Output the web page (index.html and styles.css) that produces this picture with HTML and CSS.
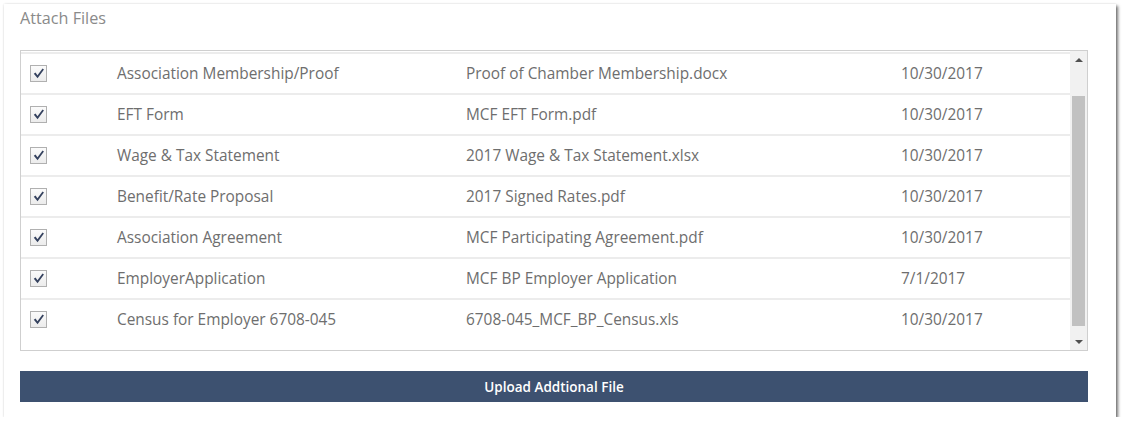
FILE: index.html
```
<!DOCTYPE html>
<html>
<head>
<meta charset="utf-8">
<link rel="stylesheet" href="styles.css">
</head>
<body>
<div class="card">
  <div class="title">Attach Files</div>
  <div class="listbox">
    <div class="rows">
      <div class="row"><span class="cb"><svg viewBox="0 0 16 16"><path d="M3 8.2 L4.8 6.9 L6.9 9.8 L12.3 2.6 L13.8 3.7 L7 13 Z"/></svg></span><span class="c2">Association Membership/Proof</span><span class="c3">Proof of Chamber Membership.docx</span><span class="c4">10/30/2017</span></div>
      <div class="row"><span class="cb"><svg viewBox="0 0 16 16"><path d="M3 8.2 L4.8 6.9 L6.9 9.8 L12.3 2.6 L13.8 3.7 L7 13 Z"/></svg></span><span class="c2">EFT Form</span><span class="c3">MCF EFT Form.pdf</span><span class="c4">10/30/2017</span></div>
      <div class="row"><span class="cb"><svg viewBox="0 0 16 16"><path d="M3 8.2 L4.8 6.9 L6.9 9.8 L12.3 2.6 L13.8 3.7 L7 13 Z"/></svg></span><span class="c2">Wage &amp; Tax Statement</span><span class="c3">2017 Wage &amp; Tax Statement.xlsx</span><span class="c4">10/30/2017</span></div>
      <div class="row"><span class="cb"><svg viewBox="0 0 16 16"><path d="M3 8.2 L4.8 6.9 L6.9 9.8 L12.3 2.6 L13.8 3.7 L7 13 Z"/></svg></span><span class="c2">Benefit/Rate Proposal</span><span class="c3">2017 Signed Rates.pdf</span><span class="c4">10/30/2017</span></div>
      <div class="row"><span class="cb"><svg viewBox="0 0 16 16"><path d="M3 8.2 L4.8 6.9 L6.9 9.8 L12.3 2.6 L13.8 3.7 L7 13 Z"/></svg></span><span class="c2">Association Agreement</span><span class="c3">MCF Participating Agreement.pdf</span><span class="c4">10/30/2017</span></div>
      <div class="row"><span class="cb"><svg viewBox="0 0 16 16"><path d="M3 8.2 L4.8 6.9 L6.9 9.8 L12.3 2.6 L13.8 3.7 L7 13 Z"/></svg></span><span class="c2">EmployerApplication</span><span class="c3">MCF BP Employer Application</span><span class="c4">7/1/2017</span></div>
      <div class="row"><span class="cb"><svg viewBox="0 0 16 16"><path d="M3 8.2 L4.8 6.9 L6.9 9.8 L12.3 2.6 L13.8 3.7 L7 13 Z"/></svg></span><span class="c2">Census for Employer 6708-045</span><span class="c3">6708-045_MCF_BP_Census.xls</span><span class="c4">10/30/2017</span></div>
    </div>
    <div class="scrollbar">
      <div class="arrow up"></div>
      <div class="track"><div class="thumb"></div></div>
      <div class="arrow down"></div>
    </div>
  </div>
  <div class="upload">Upload Addtional File</div>
</div>
</body>
</html>
```

FILE: styles.css
```
html, body {
  margin: 0;
  padding: 0;
  background: #ffffff;
}
body {
  font-family: "Open Sans", "Liberation Sans", sans-serif;
  padding: 4px 0 0 4px;
}
.card {
  width: 1112px;
  height: 413px;
  box-sizing: border-box;
  background: #fff;
  padding: 4px 28px 0 16px;
  box-shadow: 2px 2px 3px rgba(0,0,0,0.55), 0 0 2px rgba(0,0,0,0.12);
}
.title {
  font-size: 16.2px;
  line-height: 20px;
  color: #8a8a8a;
  height: 20px;
}
.listbox {
  margin-top: 22px;
  height: 301px;
  box-sizing: border-box;
  border: 1px solid #cfcfcf;
  display: flex;
}
.rows {
  flex: 1;
  padding-top: 1px;
}
.row {
  height: 41px;
  box-sizing: border-box;
  border-top: 2px solid #ececec;
  display: flex;
  align-items: center;
  font-size: 15.4px;
  color: #6e6e6e;
}
.cb {
  width: 15px;
  height: 15px;
  border: 1px solid #b0b0b0;
  background: linear-gradient(#fbfbfb, #ececec);
  margin-left: 9px;
  margin-right: 70px;
  display: flex;
  align-items: center;
  justify-content: center;
  flex: none;
}
.cb svg {
  width: 15px;
  height: 15px;
  fill: #34415e;
}
.c2 { width: 349px; flex: none; }
.c3 { width: 435px; flex: none; }
.c4 { flex: none; }
.scrollbar {
  width: 17px;
  background: #f1f1f1;
  display: flex;
  flex-direction: column;
  flex: none;
}
.arrow {
  height: 17px;
  display: flex;
  align-items: center;
  justify-content: center;
}
.arrow.up::before {
  content: "";
  border-left: 4px solid transparent;
  border-right: 4px solid transparent;
  border-bottom: 4px solid #505050;
}
.arrow.down::before {
  content: "";
  border-left: 4px solid transparent;
  border-right: 4px solid transparent;
  border-top: 4px solid #505050;
}
.track {
  flex: 1;
  padding: 28px 2px 7px 2px;
  display: flex;
  flex-direction: column;
}
.thumb {
  flex: 1;
  background: #c1c1c1;
}
.upload {
  margin-top: 20px;
  height: 31px;
  background: #3d5170;
  color: #fff;
  font-size: 13.5px;
  font-weight: 600;
  display: flex;
  align-items: center;
  justify-content: center;
}
```
